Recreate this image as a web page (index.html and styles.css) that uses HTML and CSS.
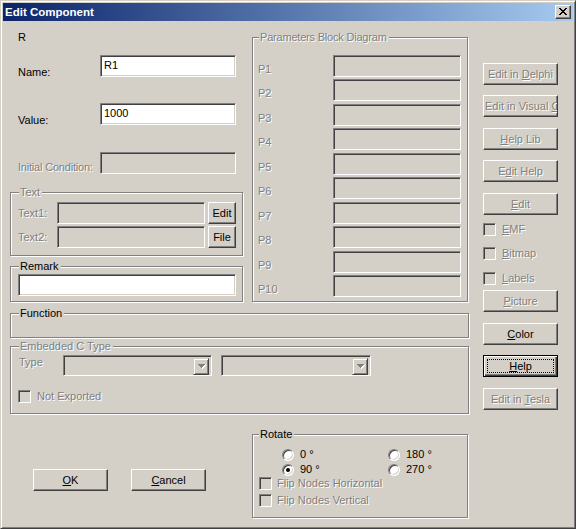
FILE: index.html
```html
<!DOCTYPE html>
<html>
<head>
<meta charset="utf-8">
<title>Edit Component</title>
<link rel="stylesheet" href="styles.css">
</head>
<body>
<div class="window">
  <div class="titlebar">
    <span class="title">Edit Component</span>
    <span class="close-btn">
      <svg width="8" height="7" viewBox="0 0 8 7" shape-rendering="crispEdges"><path fill="#000" d="M0 0h2v1h-2zM6 0h2v1h-2zM1 1h2v1h-2zM5 1h2v1h-2zM2 2h4v1h-4zM3 3h2v1h-2zM2 4h4v1h-4zM1 5h2v1h-2zM5 5h2v1h-2zM0 6h2v1h-2zM6 6h2v1h-2z"/></svg>
    </span>
  </div>
  <div class="client">
    <div class="main">
      <div class="top-row">
        <div class="left-col">
          <div class="lbl-r">R</div>
          <div class="frow frow-name"><span class="flabel">Name:</span><div class="field edit">R1</div></div>
          <div class="frow frow-value"><span class="flabel">Value:</span><div class="field edit">1000</div></div>
          <div class="frow frow-init"><span class="flabel flabel-init dis">Initial Condition:</span><div class="field off edit"></div></div>
          <div class="group g-text">
            <span class="legend dis">Text</span>
            <div class="trow"><span class="tlabel dis">Text1:</span><div class="field off tfield"></div><div class="btn tbtn">Edit</div></div>
            <div class="trow trow2"><span class="tlabel dis">Text2:</span><div class="field off tfield"></div><div class="btn tbtn">File</div></div>
          </div>
          <div class="group g-remark">
            <span class="legend">Remark</span>
            <div class="field remark"></div>
          </div>
        </div>
        <div class="group g-params">
          <span class="legend legend-r dis">Parameters Block Diagram</span>
          <div class="pgrid">
            <span class="plabel dis">P1</span><div class="field off"></div>
            <span class="plabel dis">P2</span><div class="field off"></div>
            <span class="plabel dis">P3</span><div class="field off"></div>
            <span class="plabel dis">P4</span><div class="field off"></div>
            <span class="plabel dis">P5</span><div class="field off"></div>
            <span class="plabel dis">P6</span><div class="field off"></div>
            <span class="plabel dis">P7</span><div class="field off"></div>
            <span class="plabel dis">P8</span><div class="field off"></div>
            <span class="plabel dis">P9</span><div class="field off"></div>
            <span class="plabel dis">P10</span><div class="field off"></div>
          </div>
        </div>
      </div>
      <div class="group g-func"><span class="legend">Function</span></div>
      <div class="group g-emb">
        <span class="legend dis">Embedded C Type</span>
        <div class="emb-row">
          <span class="type-label dis">Type</span>
          <div class="field off combo combo1">
            <span class="combo-btn"><svg width="8" height="5" viewBox="0 0 8 5" shape-rendering="crispEdges"><path fill="#fff" d="M1 1h7v1h-7zM2 2h5v1h-5zM3 3h3v1h-3zM4 4h1v1h-1z"/><path fill="#808080" d="M0 0h7v1h-7zM1 1h5v1h-5zM2 2h3v1h-3zM3 3h1v1h-1z"/></svg></span>
          </div>
          <div class="field off combo combo2">
            <span class="combo-btn"><svg width="8" height="5" viewBox="0 0 8 5" shape-rendering="crispEdges"><path fill="#fff" d="M1 1h7v1h-7zM2 2h5v1h-5zM3 3h3v1h-3zM4 4h1v1h-1z"/><path fill="#808080" d="M0 0h7v1h-7zM1 1h5v1h-5zM2 2h3v1h-3zM3 3h1v1h-1z"/></svg></span>
          </div>
        </div>
        <div class="cbrow emb-cb"><span class="cb off"></span><span class="cbtext dis">Not Exported</span></div>
      </div>
      <div class="bottom-row">
        <div class="okcancel">
          <div class="btn wide"><span><u>O</u>K</span></div>
          <div class="btn wide cancel"><span><u>C</u>ancel</span></div>
        </div>
        <div class="group g-rot">
          <span class="legend legend-r">Rotate</span>
          <div class="radios">
            <div class="rcell"><span class="radio"></span><span class="rtext">0 °</span></div>
            <div class="rcell"><span class="radio"></span><span class="rtext">180 °</span></div>
            <div class="rcell"><span class="radio on"></span><span class="rtext">90 °</span></div>
            <div class="rcell"><span class="radio"></span><span class="rtext">270 °</span></div>
          </div>
          <div class="cbrow flip flip1"><span class="cb off"></span><span class="cbtext dis">Flip Nodes Horizontal</span></div>
          <div class="cbrow flip flip2"><span class="cb off"></span><span class="cbtext dis">Flip Nodes Vertical</span></div>
        </div>
      </div>
    </div>
    <div class="right-col">
      <div class="btn wide dis rb1"><span>Edit in <u>D</u>elphi</span></div>
      <div class="btn wide dis clip rb2"><span>Edit in Visual <u>C</u></span></div>
      <div class="btn wide dis rb3"><span><u>H</u>elp Lib</span></div>
      <div class="btn wide dis rb4"><span>E<u>d</u>it Help</span></div>
      <div class="btn wide dis rb5"><span><u>E</u>dit</span></div>
      <div class="cbrow rc1"><span class="cb off"></span><span class="cbtext dis"><u>E</u>MF</span></div>
      <div class="cbrow rc2"><span class="cb off"></span><span class="cbtext dis"><u>B</u>itmap</span></div>
      <div class="cbrow rc3"><span class="cb off"></span><span class="cbtext dis"><u>L</u>abels</span></div>
      <div class="btn wide dis rb6"><span><u>P</u>icture</span></div>
      <div class="btn wide rb7"><span><u>C</u>olor</span></div>
      <div class="btn wide default rb8"><span><u>H</u>elp</span></div>
      <div class="btn wide dis rb9"><span>Edit in <u>T</u>esla</span></div>
    </div>
  </div>
</div>
</body>
</html>
```

FILE: styles.css
```css
html, body {
  margin: 0;
  padding: 0;
  background: #d4d0c8;
}
body {
  font: 11px/13px "Liberation Sans", Arial, sans-serif;
  color: #000;
}
.window {
  box-sizing: border-box;
  width: 576px;
  height: 529px;
  border: 1px solid;
  border-color: #d4d0c8 #404040 #404040 #d4d0c8;
  box-shadow: inset 1px 1px 0 #fff, inset -1px -1px 0 #808080;
  padding: 2px;
  background: #d4d0c8;
  overflow: hidden;
}
.titlebar {
  height: 18px;
  display: flex;
  align-items: center;
  background: linear-gradient(to right, #0a246a, #a6caf0);
  padding-left: 2px;
}
.title {
  color: #fff;
  font-weight: bold;
  font-size: 11.5px;
}
.close-btn {
  margin-left: auto;
  margin-right: 2px;
  box-sizing: border-box;
  width: 16px;
  height: 14px;
  border: 1px solid;
  border-color: #fff #404040 #404040 #fff;
  box-shadow: inset -1px -1px 0 #808080;
  background: #d4d0c8;
  display: flex;
  padding: 2px 0 0 3px;
}
.close-btn svg { display: block; }

.dis {
  color: #808080;
  text-shadow: 1px 1px 0 #fff;
}
.client {
  display: flex;
  height: 505px;
}
.main {
  margin-left: 7px;
  width: 459px;
}
.right-col {
  margin-left: 14px;
  width: 75px;
  display: flex;
  flex-direction: column;
}

/* generic widgets */
.field {
  box-sizing: border-box;
  border: 1px solid;
  border-color: #808080 #fff #fff #808080;
  box-shadow: inset 1px 1px 0 #404040, inset -1px -1px 0 #d4d0c8;
  background: #fff;
  height: 22px;
}
.field.off { background: #d4d0c8; }
.btn {
  box-sizing: border-box;
  height: 22px;
  border: 1px solid;
  border-color: #fff #404040 #404040 #fff;
  box-shadow: inset -1px -1px 0 #808080;
  background: #d4d0c8;
  display: flex;
  align-items: center;
  justify-content: center;
  white-space: nowrap;
  position: relative;
}
.btn.wide { width: 75px; }
.btn.clip {
  justify-content: flex-start;
  overflow: hidden;
  padding-left: 1px;
}
.btn.default {
  border-color: #000;
  box-shadow: inset 1px 1px 0 #fff, inset -1px -1px 0 #404040, inset -2px -2px 0 #808080;
}
.btn.default::after {
  content: "";
  position: absolute;
  left: 3px;
  top: 3px;
  right: 3px;
  bottom: 3px;
  border: 1px dotted #000;
}
.group {
  box-sizing: border-box;
  position: relative;
  border: 1px solid #808080;
  box-shadow: 1px 1px 0 #fff, inset 1px 1px 0 #fff;
}
.legend {
  position: absolute;
  top: -7px;
  left: 8px;
  padding: 0 2px 0 1px;
  background: #d4d0c8;
  white-space: nowrap;
}
.legend-r { left: 6px; }
.cbrow {
  display: flex;
  align-items: center;
  height: 13px;
}
.cb {
  box-sizing: border-box;
  width: 13px;
  height: 13px;
  border: 1px solid;
  border-color: #808080 #fff #fff #808080;
  box-shadow: inset 1px 1px 0 #404040, inset -1px -1px 0 #d4d0c8;
  background: #fff;
  flex: none;
}
.cb.off { background: #d4d0c8; }
.cbtext {
  margin-left: 6px;
  white-space: nowrap;
}

/* left column */
.top-row {
  display: flex;
  height: 281px;
}
.left-col {
  width: 233px;
}
.lbl-r {
  margin-top: 10px;
  padding-left: 8px;
  height: 13px;
}
.frow {
  display: flex;
  height: 22px;
}
.frow-name { margin-top: 11px; }
.frow-value { margin-top: 26px; }
.frow-init { margin-top: 27px; }
.flabel {
  box-sizing: border-box;
  width: 90px;
  padding-left: 8px;
  padding-top: 11px;
  white-space: nowrap;
}
.flabel-init {
  padding-top: 9px;
  letter-spacing: -0.2px;
}
.field.edit {
  width: 136px;
  padding: 3px 3px 0 3px;
}
.g-text {
  margin-top: 18px;
  width: 233px;
  height: 64px;
  padding: 9px 0 0 7px;
}
.trow {
  display: flex;
  align-items: center;
  height: 22px;
}
.trow2 { margin-top: 2px; }
.tlabel {
  width: 39px;
  white-space: nowrap;
}
.tfield { width: 148px; }
.tbtn {
  width: 28px;
  margin-left: 3px;
}
.g-remark {
  margin-top: 10px;
  width: 233px;
  height: 36px;
  padding: 7px 0 0 7px;
}
.remark { width: 218px; }

/* params */
.g-params {
  margin-left: 9px;
  margin-top: 16px;
  width: 216px;
  height: 265px;
  padding: 17px 0 0 5px;
}
.g-params .legend { letter-spacing: -0.2px; }
.pgrid {
  display: grid;
  grid-template-columns: 75px 128px;
  grid-template-rows: repeat(10, 22px);
  row-gap: 2.44px;
}
.plabel {
  padding-top: 8px;
}

/* function / embedded */
.g-func {
  margin-top: 11px;
  width: 459px;
  height: 25px;
}
.g-emb {
  margin-top: 8px;
  width: 459px;
  height: 68px;
  padding: 8px 0 0 7px;
}
.emb-row {
  display: flex;
  height: 21px;
}
.type-label {
  width: 45px;
  padding-left: 1px;
  padding-top: 1px;
  box-sizing: border-box;
}
.combo {
  height: 21px;
  display: flex;
  justify-content: flex-end;
  padding: 2px;
}
.combo1 { width: 149px; }
.combo2 { width: 150px; margin-left: 9px; }
.combo-btn {
  box-sizing: border-box;
  width: 16px;
  height: 17px;
  border: 1px solid;
  border-color: #d4d0c8 #404040 #404040 #d4d0c8;
  box-shadow: inset 1px 1px 0 #fff, inset -1px -1px 0 #808080;
  display: flex;
  align-items: center;
  justify-content: center;
  padding-left: 1px;
}
.combo-btn svg { display: block; }
.emb-cb { margin-top: 14px; }

/* bottom */
.bottom-row {
  display: flex;
}
.okcancel {
  box-sizing: border-box;
  width: 242px;
  padding: 55px 0 0 23px;
  display: flex;
  align-items: flex-start;
}
.cancel { margin-left: 23px; }
.g-rot {
  margin-top: 20px;
  width: 216px;
  height: 84px;
  padding-top: 13px;
}
.radios {
  margin-left: 29px;
  display: grid;
  grid-template-columns: 106px auto;
  grid-auto-rows: 13px;
  row-gap: 2px;
}
.rcell {
  display: flex;
  align-items: center;
}
.radio {
  box-sizing: border-box;
  width: 12px;
  height: 12px;
  border-radius: 50%;
  border: 1px solid;
  border-color: #808080 #fff #fff #808080;
  box-shadow: inset 1px 1px 0 #404040, inset -1px -1px 0 #d4d0c8;
  background: #fff;
  display: flex;
  align-items: center;
  justify-content: center;
  flex: none;
}
.radio.on::before {
  content: "";
  width: 4px;
  height: 4px;
  border-radius: 50%;
  background: #000;
}
.rtext {
  margin-left: 6px;
  white-space: nowrap;
}
.flip { margin-left: 6px; }
.flip .cbtext { margin-left: 5px; }
.flip1 { margin-top: 1px; }
.flip2 { margin-top: 4px; }

/* right column spacing */
.rb1 { margin-top: 42px; }
.rb2 { margin-top: 10px; }
.rb3 { margin-top: 11px; }
.rb4 { margin-top: 10px; }
.rb5 { margin-top: 11px; }
.rc1 { margin-top: 8px; }
.rc2 { margin-top: 11px; }
.rc3 { margin-top: 12px; }
.rb6 { margin-top: 5px; }
.rb7 { margin-top: 11px; }
.rb8 { margin-top: 10px; }
.rb9 { margin-top: 11px; }
```
